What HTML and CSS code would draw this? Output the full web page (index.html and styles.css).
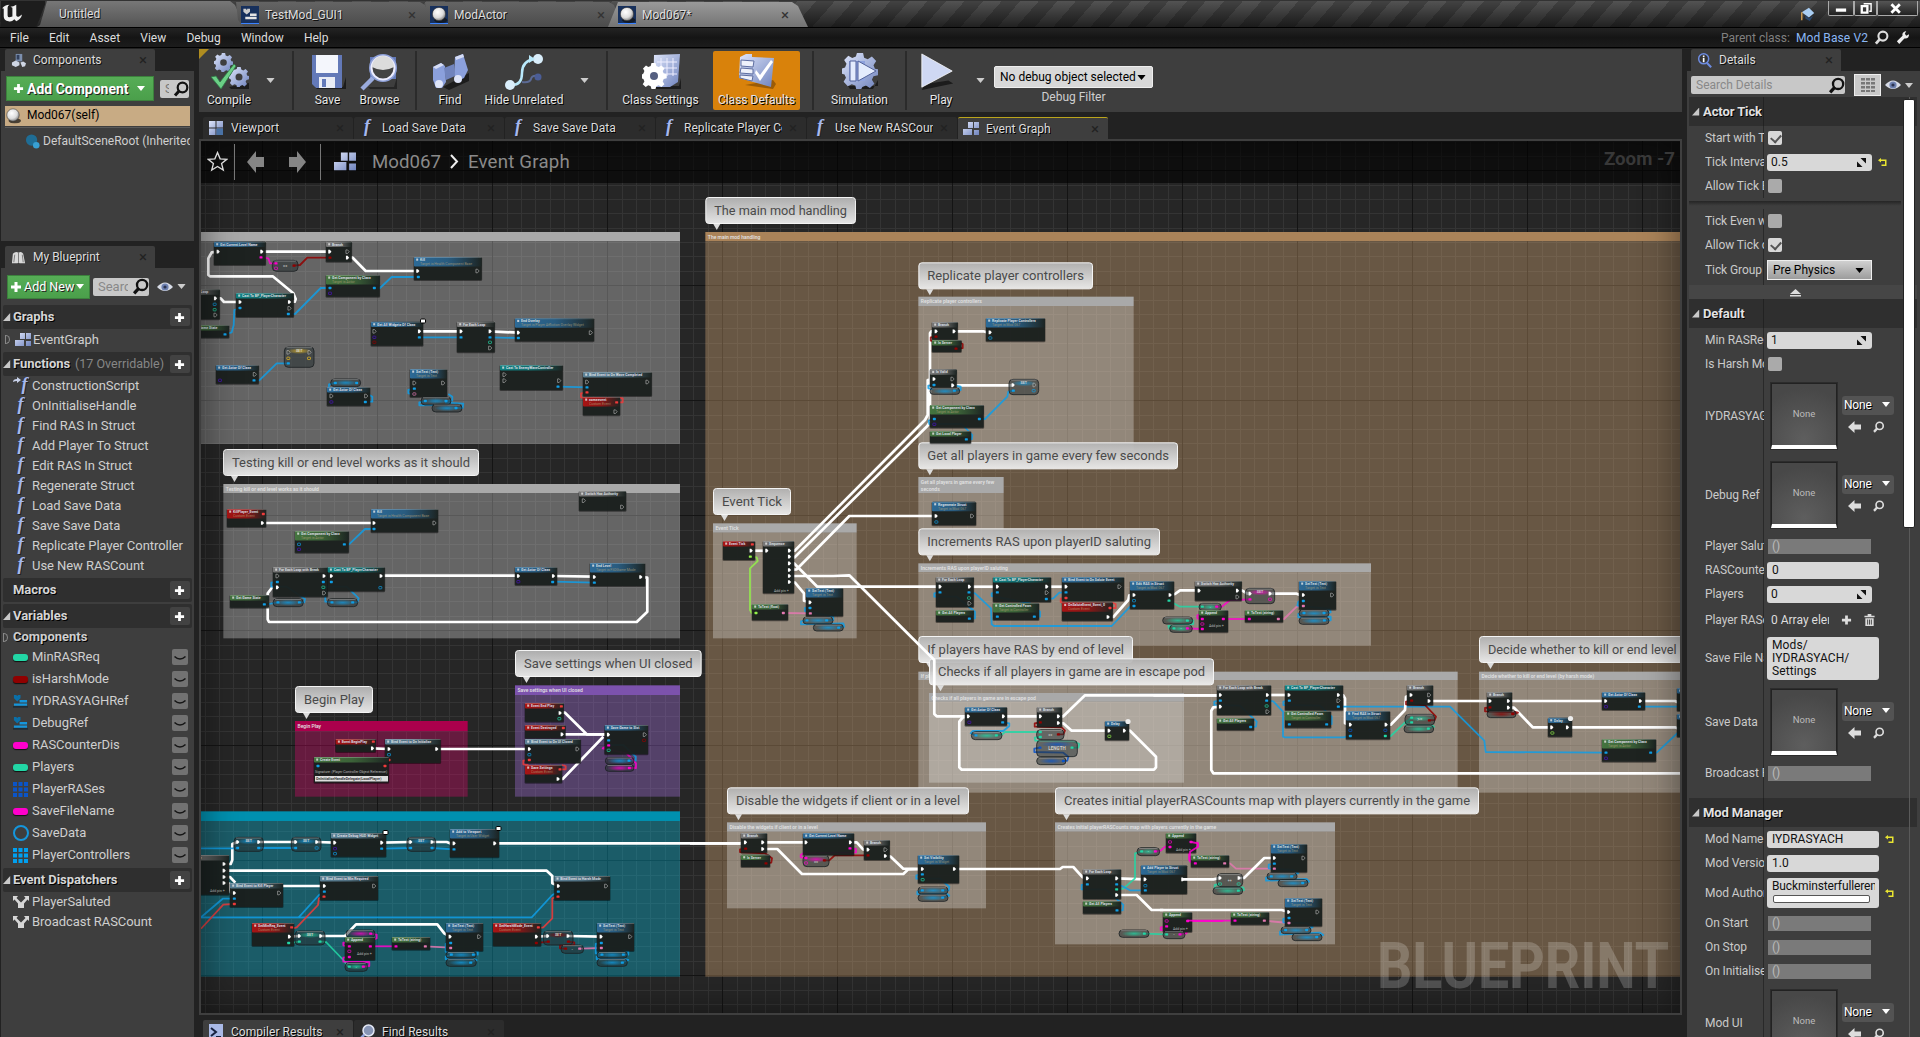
FILE: index.html
```html
<!DOCTYPE html>
<html lang="en">
<head>
<meta charset="utf-8">
<title>Mod067 - Blueprint Editor</title>
<link rel="stylesheet" href="styles.css">
</head>
<body>
<svg class="defs" width="0" height="0">
  <defs>
    <linearGradient id="steel" x1="0" y1="0" x2="1" y2="1"><stop offset="0" stop-color="#dfe6fb"/><stop offset="1" stop-color="#6f83bd"/></linearGradient>
    <radialGradient id="ball" cx=".4" cy=".35" r=".7"><stop offset="0" stop-color="#fff"/><stop offset=".6" stop-color="#ddd"/><stop offset="1" stop-color="#777"/></radialGradient>
    <symbol id="i-actor" viewBox="0 0 18 18"><ellipse cx="11" cy="15" rx="7" ry="3" fill="#111" opacity=".7"/><circle cx="9" cy="8.5" r="7" fill="url(#ball)" stroke="#333" stroke-width=".6"/></symbol>
    <symbol id="i-widget" viewBox="0 0 18 18"><path d="M2 3h3v1h1V3h3v3L5.5 9 2 6z" fill="#ccc"/><path d="M9 8h7v2.5H9zM4 11.5h12V14H4z" fill="#e4e4e4"/></symbol>
    <symbol id="i-varwidget" viewBox="0 0 16 16"><path d="M1 1h2.500l1 1 1-1H8v3.500L4.500 8 1 4.500z" fill="#0a6fa8"/><path d="M7 6.500h8V9H7zM1 10h14v2.500H1z" fill="#1596dc"/><path d="M0 13h16v1.500H0z" fill="#1a2a36"/></symbol>
    <symbol id="i-grid" viewBox="0 0 16 16"><path d="M5 1h5v6H5zM11 1h5v6h-5zM0 8h9v6H0zM11 9h5v5h-5z" fill="url(#steel)"/></symbol>
    <symbol id="i-viewport" viewBox="0 0 16 16"><path d="M1 1h6.500v6.500H1zM8.500 1H15v6.500H8.500zM1 8.500h6.500V15H1zM8.500 8.500H15V15H8.500z" fill="url(#steel)"/><path d="M8.500 8.500H15V15H8.500z" fill="#4a72a5"/></symbol>
    <symbol id="i-mag" viewBox="0 0 16 16"><circle cx="9.500" cy="6.500" r="4.800" fill="none" stroke="currentColor" stroke-width="2.200"/><path d="M6.500 9.500 2 14.500" stroke="currentColor" stroke-width="3"/></symbol>
    <symbol id="i-plus" viewBox="0 0 12 12"><path d="M4.500 1h3v3.500H11v3H7.500V11h-3V7.500H1v-3h3.500z" fill="currentColor"/></symbol>
    <symbol id="i-down" viewBox="0 0 10 6"><path d="M0 0h10L5 6z" fill="currentColor"/></symbol>
    <symbol id="i-eye" viewBox="0 0 18 12"><path d="M1 6Q9-3 17 6 9 14 1 6z" fill="#d7dbe6"/><circle cx="9" cy="6" r="3.600" fill="#6d80b0"/><circle cx="9" cy="6" r="1.600" fill="#2b3350"/></symbol>
    <symbol id="i-closed" viewBox="0 0 16 16"><rect width="16" height="16" rx="2" fill="#727272"/><path d="M2.500 7.500q5.500 5 11 0" fill="none" stroke="#161616" stroke-width="1.600"/></symbol>
    <symbol id="i-dispatch" viewBox="0 0 16 14"><path d="M0 1h5L3.500 3 8 7.500 12.500 3 11 1h5v5l-1.500-1.500L11 8.500V13H5V8.500L1.500 4.500 0 6z" fill="#d6d6d6"/><path d="M7 0h2v6H7z" fill="#3e3e3e"/></symbol>
    <symbol id="i-array" viewBox="0 0 15 15"><path d="M0 0h4v4H0zM5.500 0h4v4h-4zM11 0h4v4h-4zM0 5.500h4v4H0zM5.500 5.500h4v4h-4zM11 5.500h4v4h-4zM0 11h4v4H0zM5.500 11h4v4h-4zM11 11h4v4h-4z" fill="currentColor"/></symbol>
    <symbol id="i-spin" viewBox="0 0 9 9"><path d="M3.500 0H9v5.500zM0 3.500V9h5.500z" fill="#111"/></symbol>
    <symbol id="i-reset" viewBox="0 0 9 9"><path d="M3 0v1.500h5.500V8H3.500V6.500H7V3H3v1.500L0 2.250z" fill="#e9e531"/></symbol>
    <symbol id="i-left" viewBox="0 0 13 12"><path d="M6.500 0v3.500H13v5H6.500V12L0 6z" fill="currentColor"/></symbol>
    <symbol id="i-gear" viewBox="0 0 20 20"><path d="M8.300 0h3.400l.6 2.600 2 .9L16.600 2 19 4.500l-1.500 2.300.8 1.900L20 9v3.300l-2.500.6-.9 1.900 1.400 2.300-2.500 2.300-2.200-1.300-2 .8L10.700 20H7.900l-.5-1.900-2-.8-2.200 1.200L.9 16l1.300-2.200-.8-1.900L0 11.500V8.600L1.700 8l.8-2L1.200 3.900l2.300-2.400 2.200 1.300 2-.8zM10 6.500a3.500 3.500 0 1 0 0 7 3.500 3.500 0 0 0 0-7z" fill="url(#steel)" fill-rule="evenodd"/></symbol>
    <symbol id="t-compile" viewBox="0 0 40 38"><path d="M20 34l20-4v6H22z" fill="#1c1c1c"/><use href="#i-gear" x="5" y="0" width="19" height="19"/><use href="#i-gear" x="20" y="13" width="20" height="22"/><path d="M2 24l5-1 4 6L25 11l2 2-15 23z" fill="#6bcf86" stroke="#2d7a45" stroke-width=".8"/></symbol>
    <symbol id="t-save" viewBox="0 0 36 38"><path d="M5 34h28l3-10v12H7z" fill="#1c1c1c"/><path d="M2 2h30v33H6l-4-4z" fill="#6379b8"/><path d="M6 2h22v18H6z" fill="#f4f6fc"/><path d="M9 24h16v11H9z" fill="#e9ecf5"/><path d="M12 26h4v8h-4z" fill="#6379b8"/></symbol>
    <symbol id="t-browse" viewBox="0 0 40 38"><path d="M8 34h26l3-10v12H10z" fill="#1c1c1c" opacity=".7"/><path d="M10 4h26v22H10z" fill="#6379b8"/><circle cx="23" cy="15" r="14" fill="#8fa1d8"/><circle cx="23" cy="15" r="11.500" fill="#444" stroke="#eef" stroke-width="2"/><path d="M12 14a11 11 0 0 1 22 0q-11 6-22 0z" fill="#dcdcdc"/><path d="M13 25 2 36" stroke="#9aabdd" stroke-width="4.500"/></symbol>
    <symbol id="t-find" viewBox="0 0 38 38"><path d="M12 34 38 20v8L18 37z" fill="#1c1c1c"/><path d="M2 14l8-4 4 3 1 16-4 6H5L2 27z" fill="#8ba0dc"/><path d="M24 4l8-3 5 16-4 8-6 3-4-6z" fill="#8ba0dc"/><path d="M13 15l10-4 1 12-9 4z" fill="#7184bd"/><circle cx="8" cy="31" r="4" fill="#dfe5f8"/><circle cx="27" cy="26" r="4" fill="#dfe5f8"/><path d="M2 14l8-4 3 2-8 4zM24 4l8-3 1 3-8 3z" fill="#d5dcf5"/></symbol>
    <symbol id="t-hide" viewBox="0 0 40 38"><path d="M8 32q10 0 10-12T30 6" fill="none" stroke="#b9e9fb" stroke-width="2.500"/><path d="M18 29q8 1 9-3t7-3" fill="none" stroke="#5b6a94" stroke-width="2"/><circle cx="34" cy="6" r="5" fill="#d9eefb"/><circle cx="6" cy="32" r="5" fill="#d9eefb"/><circle cx="34" cy="24" r="3.500" fill="#4b5d96"/><path d="M25 2l6 4-6 4z" fill="#b9e9fb"/></symbol>
    <symbol id="t-settings" viewBox="0 0 40 38"><path d="M12 33h26l2-8v11H14z" fill="#1c1c1c"/><path d="M13 2l26-1-2 28-8 5H12z" fill="url(#steel)"/><path d="M20 5v18M26 5v18M32 5v18M16 9h20M16 15h20M16 21h20" stroke="#eef" fill="none"/><g transform="translate(1 10)"><path d="M9.500 0h4l.8 3 2.400 1L19.500 2.500l3 3L20.700 8l1 2.500 3 .8v4l-3 .7-1 2.500 1.700 2.700-3 2.800-2.700-1.700-2.400 1-.8 2.700h-4l-.8-2.700-2.400-1-2.600 1.700-3-2.800L2.400 18.500l-1-2.500-1.400-.5v-4l1.400-1 1-2.500L1 5.500l3-3L6.300 4l2.400-1z" fill="#fff"/><circle cx="12" cy="13" r="4" fill="#555f80"/></g></symbol>
    <symbol id="t-defaults" viewBox="0 0 40 38"><path d="M8 32l28-5 3 4-3 5z" fill="#9b5c07"/><path d="M3 4l6-3h6v3l22 1-3 29L2 25z" fill="url(#steel)"/><path d="M4 7l13 1-1 6L4 13zM4 15l12 1v5L3 20zM3 22l13 1-1 5-12-3z" fill="#eef1fb" stroke="#5d6da0"/><path d="M19 17l4 5L34 7l2 2-13 19-5-8z" fill="#fff"/></symbol>
    <symbol id="t-sim" viewBox="0 0 40 38"><path d="M8 33h30v-6l-5 9H10z" fill="#1c1c1c"/><use href="#i-gear" x="2" y="0" width="36" height="36"/><path d="M9 8h16v20H9z" fill="#8ea2dd"/><path d="M10 8h6v20h-6zM18 8l18 10-18 10z" fill="#e4ecfd" stroke="#53639a"/></symbol>
    <symbol id="t-play" viewBox="0 0 36 40"><path d="M2 39l33-7-5-3L5 33z" fill="#1c1c1c"/><path d="M2 1l32 18L2 36z" fill="#cfd8f3" stroke="#fff" stroke-width=".8"/></symbol>
  </defs>
</svg>

<header class="titlebar">
  <svg class="logo" viewBox="0 0 46 27"><path d="M0 0h46v3L38 24q-1 3-4 3H0z" fill="#1d1d1d"/><path d="M1 8q3-4 8-4-2 1-2 3v8q0 2 2 2l3-1V7l-2-1q3 0 6-2v11q1 2 3 1l3-2q-1 5-6 7l-2-2q-3 3-6 2-5-1-5-5V8q-1-1-2 0z" fill="#f2f2f2"/></svg>
  <div class="wtab wtab-first"><span>Untitled</span></div>
  <div class="wtab"><i class="wicon"><svg viewBox="0 0 18 18"><use href="#i-widget"/></svg></i><span>TestMod_GUI1</span><b class="x">×</b></div>
  <div class="wtab"><i class="wicon"><svg viewBox="0 0 18 18"><use href="#i-actor"/></svg></i><span>ModActor</span><b class="x">×</b></div>
  <div class="wtab wtab-on"><i class="wicon"><svg viewBox="0 0 18 18"><use href="#i-actor"/></svg></i><span>Mod067*</span><b class="x">×</b></div>
  <svg class="cap" viewBox="0 0 18 18"><path d="M2 7l8-5 6 6-6 5z" fill="#a9cdf2"/><path d="M6 10v4l5 3 4-6-5 3z" fill="#27466e"/><path d="M2 7v9" stroke="#d9a556" stroke-width="1.500"/></svg>
  <div class="winbtns"><i><svg viewBox="0 0 25 15"><path d="M7 8h11v3.500H7z" fill="#fff"/></svg></i><i><svg viewBox="0 0 22 15"><path d="M9 3h8v8h-2" fill="none" stroke="#fff" stroke-width="1.500"/><path d="M7 5.500h6v7H7z" fill="none" stroke="#fff" stroke-width="2.500"/></svg></i><i><svg viewBox="0 0 41 15"><path d="M14 3.500l9 9m0-9-9 9" stroke="#fff" stroke-width="3"/></svg></i></div>
</header>
<nav class="menubar">
  <span>File</span><span>Edit</span><span>Asset</span><span>View</span><span>Debug</span><span>Window</span><span>Help</span>
  <div class="parent"><em>Parent class:</em><a>Mod Base V2</a><svg viewBox="0 0 16 16"><use href="#i-mag"/></svg><svg viewBox="0 0 16 16"><path d="M2 12l6-6q-1-4 4-5l-1.500 3L12 6l3-1.500q0 5-5 4.500l-5.500 6z" fill="#eee"/></svg></div>
</nav>

<main class="work">
  <aside class="left">
    <section class="components">
      <div class="ptab"><svg viewBox="0 0 16 16"><path d="M5 1h7v8H5z" fill="#7c8fae"/><path d="M1 10l4-2 4 2v3l-4 2-4-2zM10 10l3-1 3 2-1 3-3 1z" fill="#cfd6e4"/><path d="M6 2h3v5H6z" fill="#32405c"/></svg><span>Components</span><b class="x">×</b></div>
      <div class="pbody">
        <div class="comp-tools"><div class="btn-green add-comp"><svg viewBox="0 0 12 12"><use href="#i-plus"/></svg><b>Add Component</b><svg class="dn" viewBox="0 0 10 6"><use href="#i-down"/></svg></div><div class="minisearch"><em>S</em><svg viewBox="0 0 16 16"><use href="#i-mag"/></svg></div></div>
        <div class="self"><svg viewBox="0 0 18 18"><use href="#i-actor"/></svg><span>Mod067(self)</span></div>
        <div class="scene"><svg viewBox="0 0 16 16"><circle cx="7" cy="6.500" r="6" fill="#1f6d95"/><circle cx="12" cy="12" r="3.500" fill="#38a0d4"/></svg><span>DefaultSceneRoot (Inherited)</span></div>
      </div>
    </section>
    <section class="myblueprint">
      <div class="ptab"><svg viewBox="0 0 16 16"><path d="M2 4q3-3 6-1 3-2 5 1l2 10H9l-1-1-1 1H1z" fill="#d9d9d9"/><path d="M8 3v10M4 5l-1 8M12 5l1 8" stroke="#777"/></svg><span>My Blueprint</span><b class="x">×</b></div>
      <div class="pbody">
        <div class="bp-tools"><div class="btn-green add-new"><svg viewBox="0 0 12 12"><use href="#i-plus"/></svg><span>Add New</span><svg class="dn" viewBox="0 0 10 6"><use href="#i-down"/></svg></div><div class="search"><em>Search</em><svg viewBox="0 0 16 16"><use href="#i-mag"/></svg></div><svg class="eye" viewBox="0 0 18 12"><use href="#i-eye"/></svg><svg class="dn" viewBox="0 0 10 6"><use href="#i-down"/></svg></div>
        <div class="cat"><i class="tri"></i><b>Graphs</b><u><svg viewBox="0 0 12 12"><use href="#i-plus"/></svg></u></div>
        <div class="item graph"><i class="tri-o"></i><svg viewBox="0 0 16 16"><use href="#i-grid"/></svg><span>EventGraph</span></div>
        <div class="cat"><i class="tri"></i><b>Functions</b><em>(17 Overridable)</em><u><svg viewBox="0 0 12 12"><use href="#i-plus"/></svg></u></div>
        <div class="item"><i class="fn"><svg class="cs" viewBox="0 0 8 8"><path d="M0 5q0-3 4-3V0l4 3-4 3V4Q2 4 0 5z" fill="#c9d2ea"/></svg>f</i><span>ConstructionScript</span></div>
        <div class="item"><i class="fn">f</i><span>OnInitialiseHandle</span></div>
        <div class="item"><i class="fn">f</i><span>Find RAS In Struct</span></div>
        <div class="item"><i class="fn">f</i><span>Add Player To Struct</span></div>
        <div class="item"><i class="fn">f</i><span>Edit RAS In Struct</span></div>
        <div class="item"><i class="fn">f</i><span>Regenerate Struct</span></div>
        <div class="item"><i class="fn">f</i><span>Load Save Data</span></div>
        <div class="item"><i class="fn">f</i><span>Save Save Data</span></div>
        <div class="item"><i class="fn">f</i><span>Replicate Player Controller</span></div>
        <div class="item"><i class="fn">f</i><span>Use New RASCount</span></div>
        <div class="cat"><i class="tri none"></i><b>Macros</b><u><svg viewBox="0 0 12 12"><use href="#i-plus"/></svg></u></div>
        <div class="cat"><i class="tri"></i><b>Variables</b><u><svg viewBox="0 0 12 12"><use href="#i-plus"/></svg></u></div>
        <div class="subcat"><i class="tri-o"></i><b>Components</b></div>
        <div class="var"><i class="pill int"></i><span>MinRASReq</span><svg viewBox="0 0 16 16"><use href="#i-closed"/></svg></div>
        <div class="var"><i class="pill bool"></i><span>isHarshMode</span><svg viewBox="0 0 16 16"><use href="#i-closed"/></svg></div>
        <div class="var"><i class="vi"><svg viewBox="0 0 16 16"><use href="#i-varwidget"/></svg></i><span>IYDRASYAGHRef</span><svg viewBox="0 0 16 16"><use href="#i-closed"/></svg></div>
        <div class="var"><i class="vi"><svg viewBox="0 0 16 16"><use href="#i-varwidget"/></svg></i><span>DebugRef</span><svg viewBox="0 0 16 16"><use href="#i-closed"/></svg></div>
        <div class="var"><i class="pill str"></i><span>RASCounterDis</span><svg viewBox="0 0 16 16"><use href="#i-closed"/></svg></div>
        <div class="var"><i class="pill int"></i><span>Players</span><svg viewBox="0 0 16 16"><use href="#i-closed"/></svg></div>
        <div class="var"><i class="vi arr-struct"><svg viewBox="0 0 15 15"><use href="#i-array"/></svg></i><span>PlayerRASes</span><svg viewBox="0 0 16 16"><use href="#i-closed"/></svg></div>
        <div class="var"><i class="pill str"></i><span>SaveFileName</span><svg viewBox="0 0 16 16"><use href="#i-closed"/></svg></div>
        <div class="var"><i class="ring"></i><span>SaveData</span><svg viewBox="0 0 16 16"><use href="#i-closed"/></svg></div>
        <div class="var"><i class="vi arr-obj"><svg viewBox="0 0 15 15"><use href="#i-array"/></svg></i><span>PlayerControllers</span><svg viewBox="0 0 16 16"><use href="#i-closed"/></svg></div>
        <div class="cat"><i class="tri"></i><b>Event Dispatchers</b><u><svg viewBox="0 0 12 12"><use href="#i-plus"/></svg></u></div>
        <div class="item"><svg class="disp" viewBox="0 0 16 14"><use href="#i-dispatch"/></svg><span>PlayerSaluted</span></div>
        <div class="item"><svg class="disp" viewBox="0 0 16 14"><use href="#i-dispatch"/></svg><span>Broadcast RASCount</span></div>
      </div>
    </section>
  </aside>

  <section class="center">
    <div class="toolbar">
      <i class="corner"></i>
      <div class="tool w-compile"><svg viewBox="0 0 40 38"><use href="#t-compile"/></svg><span>Compile</span></div><svg class="dn dn1" viewBox="0 0 10 6"><use href="#i-down"/></svg><i class="sep"></i>
      <div class="tool w-save"><svg viewBox="0 0 36 38"><use href="#t-save"/></svg><span>Save</span></div>
      <div class="tool w-browse"><svg viewBox="0 0 40 38"><use href="#t-browse"/></svg><span>Browse</span></div><i class="sep"></i>
      <div class="tool w-find"><svg viewBox="0 0 38 38"><use href="#t-find"/></svg><span>Find</span></div>
      <div class="tool w-hide"><svg viewBox="0 0 40 38"><use href="#t-hide"/></svg><span>Hide Unrelated</span></div><svg class="dn dn2" viewBox="0 0 10 6"><use href="#i-down"/></svg><i class="sep"></i>
      <div class="tool w-set"><svg viewBox="0 0 40 38"><use href="#t-settings"/></svg><span>Class Settings</span></div>
      <div class="tool w-def on"><svg viewBox="0 0 40 38"><use href="#t-defaults"/></svg><span>Class Defaults</span></div><i class="sep s2"></i>
      <div class="tool w-sim"><svg viewBox="0 0 40 38"><use href="#t-sim"/></svg><span>Simulation</span></div><i class="sep"></i>
      <div class="tool w-play"><svg viewBox="0 0 36 40"><use href="#t-play"/></svg><span>Play</span></div><svg class="dn dn3" viewBox="0 0 10 6"><use href="#i-down"/></svg>
      <div class="debug"><div class="dd"><span>No debug object selected</span><svg viewBox="0 0 10 6"><use href="#i-down"/></svg></div><span>Debug Filter</span></div>
    </div>
    <div class="tabs">
      <div class="tab"><svg viewBox="0 0 16 16"><use href="#i-viewport"/></svg><span>Viewport</span><b class="x">×</b></div>
      <div class="tab"><i class="fn">f</i><span>Load Save Data</span><b class="x">×</b></div>
      <div class="tab"><i class="fn">f</i><span>Save Save Data</span><b class="x">×</b></div>
      <div class="tab"><i class="fn">f</i><span>Replicate Player Controller</span><b class="x">×</b></div>
      <div class="tab"><i class="fn">f</i><span>Use New RASCount</span><b class="x">×</b></div>
      <div class="tab on"><svg viewBox="0 0 16 16"><use href="#i-grid"/></svg><span>Event Graph</span><b class="x">×</b></div>
    </div>
    <div class="graph-frame">
      <svg id="graph" viewBox="201 141 1479 872" width="1479" height="872"></svg>
      <div class="vignette"></div>
      <div class="crumbs">
        <svg class="star" viewBox="0 0 20 20"><path d="M10 1.500l2.500 6 6.300.4-4.900 4.100 1.600 6.200L10 14.800l-5.500 3.400 1.600-6.200L1.200 7.900l6.300-.4z" fill="none" stroke="#ddd" stroke-width="1.300"/></svg>
        <i class="bar"></i>
        <svg class="nav" viewBox="0 0 17 22"><path d="M9 0v6h8v10H9v6L0 11z" fill="#858585"/></svg>
        <svg class="nav n2" viewBox="0 0 17 22"><path d="M8 0v6H0v10h8v6l9-11z" fill="#858585"/></svg>
        <i class="bar b2"></i>
        <svg class="gi" viewBox="0 0 16 16"><use href="#i-grid"/></svg>
        <span>Mod067</span><svg class="chev" viewBox="0 0 9 15"><path d="M1 1l6 6.500L1 14" fill="none" stroke="#eee" stroke-width="2"/></svg><span>Event Graph</span>
        <strong>Zoom -7</strong>
      </div>
    </div>
    <div class="tabs bottom">
      <div class="tab on"><svg viewBox="0 0 16 16"><path d="M1 0h14v14l-2 2H1z" fill="#a9b9e6"/><path d="M3 4l5 4-5 4M8 13h5" fill="none" stroke="#16213f" stroke-width="2"/></svg><span>Compiler Results</span><b class="x">×</b></div>
      <div class="tab"><svg viewBox="0 0 16 16"><circle cx="9.500" cy="6.500" r="5.500" fill="#8795b5" stroke="#e3e8f5" stroke-width="1.500"/><path d="M5.500 10.500 1 15" stroke="#8fa1d8" stroke-width="2.500"/></svg><span>Find Results</span><b class="x">×</b></div>
    </div>
  </section>

  <aside class="right">
    <div class="ptab"><svg viewBox="0 0 18 18"><circle cx="8" cy="7" r="6" fill="#333" stroke="#6d8be0" stroke-width="1.800"/><path d="M12 12l5 5" stroke="#6d8be0" stroke-width="2.500"/><path d="M7 3h2v2H7zM7 6h2v5H7z" fill="#fff"/></svg><span>Details</span><b class="x">×</b></div>
    <div class="pbody">
      <div class="det-tools"><div class="search"><em>Search Details</em><svg viewBox="0 0 16 16"><use href="#i-mag"/></svg></div><i class="matrix"><svg viewBox="0 0 14 14"><path d="M0 0h4v2.500H0zM5 0h4v2.500H5zM10 0h4v2.500h-4zM0 4h4v2.500H0zM5 4h4v2.500H5zM10 4h4v2.500h-4zM0 8h4v2.500H0zM5 8h4v2.500H5zM10 8h4v2.500h-4zM0 12h4v2H0zM5 12h4v2H5zM10 12h4v2h-4z" fill="#777"/></svg></i><svg class="eye" viewBox="0 0 18 12"><use href="#i-eye"/></svg><svg class="dn" viewBox="0 0 10 6"><use href="#i-down"/></svg></div>
      <div class="props">
        <div class="scroll"><i></i></div>
        <div class="dhead"><i class="tri"></i><b>Actor Tick</b></div>
        <div class="row"><label>Start with Tick</label><i class="chk on"></i></div>
        <div class="row"><label>Tick Interval</label><div class="num">0.5<svg viewBox="0 0 9 9"><use href="#i-spin"/></svg></div><svg class="rst far" viewBox="0 0 9 9"><use href="#i-reset"/></svg></div>
        <div class="row"><label>Allow Tick Before</label><i class="chk"></i></div>
        <div class="advsep"></div>
        <div class="row"><label>Tick Even when</label><i class="chk"></i></div>
        <div class="row"><label>Allow Tick on</label><i class="chk on"></i></div>
        <div class="row h26"><label>Tick Group</label><div class="combo">Pre Physics<svg viewBox="0 0 10 6"><use href="#i-down"/></svg></div></div>
        <div class="strip"><svg viewBox="0 0 11 8"><path d="M5.500 0 11 5H0zM0 6h11v1.500H0z" fill="#ddd"/></svg></div>
        <div class="dhead"><i class="tri"></i><b>Default</b></div>
        <div class="row"><label>Min RASReq</label><div class="num">1<svg viewBox="0 0 9 9"><use href="#i-spin"/></svg></div></div>
        <div class="row"><label>Is Harsh Mode</label><i class="chk"></i></div>
        <div class="row h79"><label>IYDRASYAGHRef</label><div class="thumb">None</div><div class="asset"><div>None<svg viewBox="0 0 10 6"><use href="#i-down"/></svg></div><p><svg viewBox="0 0 13 12"><use href="#i-left"/></svg><svg viewBox="0 0 16 16"><use href="#i-mag"/></svg></p></div></div>
        <div class="row h79"><label>Debug Ref</label><div class="thumb">None</div><div class="asset"><div>None<svg viewBox="0 0 10 6"><use href="#i-down"/></svg></div><p><svg viewBox="0 0 13 12"><use href="#i-left"/></svg><svg viewBox="0 0 16 16"><use href="#i-mag"/></svg></p></div></div>
        <div class="row"><label>Player Saluted</label><div class="dim">()</div></div>
        <div class="row"><label>RASCounterDis</label><div class="txt">0</div></div>
        <div class="row"><label>Players</label><div class="num">0<svg viewBox="0 0 9 9"><use href="#i-spin"/></svg></div></div>
        <div class="row h28"><label>Player RASes</label><div class="arr"><span>0 Array elements</span><svg viewBox="0 0 12 12"><use href="#i-plus"/></svg><svg viewBox="0 0 11 13"><path d="M0 2h3.500V0h4v2H11v1.500H0zM1 4.500h9V13H1z" fill="#ddd"/><path d="M3.500 6v5.500M5.500 6v5.500M7.500 6v5.500" stroke="#3e3e3e"/></svg></div></div>
        <div class="row h48"><label>Save File Name</label><div class="txt multi">Mods/<br>IYDRASYACH/<br>Settings</div></div>
        <div class="row h79"><label>Save Data</label><div class="thumb">None</div><div class="asset"><div>None<svg viewBox="0 0 10 6"><use href="#i-down"/></svg></div><p><svg viewBox="0 0 13 12"><use href="#i-left"/></svg><svg viewBox="0 0 16 16"><use href="#i-mag"/></svg></p></div></div>
        <div class="row"><label>Broadcast RASCount</label><div class="dim">()</div></div>
        <div class="gap13"></div>
        <div class="dhead full"><i class="tri"></i><b>Mod Manager</b></div>
        <div class="row"><label>Mod Name</label><div class="txt">IYDRASYACH</div><svg class="rst" viewBox="0 0 9 9"><use href="#i-reset"/></svg></div>
        <div class="row"><label>Mod Version</label><div class="txt">1.0</div></div>
        <div class="row h36"><label>Mod Author</label><div class="txt author"><span>Buckminsterfullerene</span><i></i></div><svg class="rst" viewBox="0 0 9 9"><use href="#i-reset"/></svg></div>
        <div class="row"><label>On Start</label><div class="dim">()</div></div>
        <div class="row"><label>On Stop</label><div class="dim">()</div></div>
        <div class="row"><label>On Initialised</label><div class="dim">()</div></div>
        <div class="row h79"><label>Mod UI</label><div class="thumb">None</div><div class="asset"><div>None<svg viewBox="0 0 10 6"><use href="#i-down"/></svg></div><p><svg viewBox="0 0 13 12"><use href="#i-left"/></svg><svg viewBox="0 0 16 16"><use href="#i-mag"/></svg></p></div></div>
      </div>
    </div>
  </aside>
</main>
<script src="graph.js"></script>
</body>
</html>
```
FILE: styles.css
```css
* { box-sizing: border-box; }
body { margin: 0; width: 1920px; height: 1037px; overflow: hidden; background: #222; color: #cfcfcf; font: 12px/16px Roboto, "Liberation Sans", sans-serif; display: flex; flex-direction: column; }
svg { display: block; flex: none; }
i, em, u { font-style: normal; text-decoration: none; flex: none; }
.defs { position: absolute; }
.x { font-weight: 400; font-size: 15px; color: #222; margin-left: auto; text-shadow: none; }
.dn { width: 9px; height: 5px; color: #ccc; }

.titlebar { height: 27px; display: flex; flex: none; background: linear-gradient(rgba(0,0,0,0), rgba(0,0,0,.6)), repeating-linear-gradient(131deg, #424242 0 14px, #535353 14px 28px); border-top: 1px solid #333; overflow: hidden; }
.logo { width: 46px; height: 26px; z-index: 1; }
.wtab { position: relative; display: flex; align-items: center; width: 200px; margin-right: -11px; padding: 0 20px 0 5px; height: 25px; margin-top: 1px; background: linear-gradient(#646464, #4b4b4b); clip-path: polygon(0 0, 184px 0, 189px 3px, 198px 100%, 8px 100%, 2px 18px); color: #ddd; text-shadow: 1px 1px 0 #111; }
.wtab-first { margin-left: -9px; width: 210px; height: 26px; margin-top: 0; background: linear-gradient(#777, #545454); clip-path: polygon(10px 0, 193px 0, 198px 4px, 208px 100%, 0 100%, 3px 24px); padding-left: 22px; }
.wtab-on { background: linear-gradient(#999, #747474); margin-left: -6px; width: 201px; clip-path: polygon(10px 0, 184px 0, 190px 4px, 200px 100%, 0 100%); }
.wtab-on .wicon { margin-left: 5px; }
.wicon { width: 18px; height: 18px; background: #17305c; border-bottom: 1px solid #3a82ff; margin-right: 6px; }
.wicon svg { width: 18px; height: 17px; }
.wtab .x { color: #333; }
.cap { width: 16px; height: 18px; margin: 4px 12px 0 auto; }
.winbtns { display: flex; height: 15px; margin-right: 2px; }
.winbtns i { border: 1px solid #aaa; border-top: 0; background: linear-gradient(#555, #222); border-radius: 0 0 2px 2px; }
.winbtns svg { height: 14px; width: 24px; }
.winbtns i:nth-child(2) svg { width: 21px; }
.winbtns i:nth-child(3) svg { width: 39px; }

.menubar { height: 21px; flex: none; display: flex; align-items: center; gap: 20.2px; padding-left: 10px; border-top: 1px solid #000; border-bottom: 1px solid #000; background: linear-gradient(#232323, #151515 50%, #1c1c1c); color: #ddd; }
.parent { margin-left: auto; display: flex; align-items: center; gap: 5px; padding-right: 10px; }
.parent em { color: #808080; margin-right: 1px; }
.parent a { color: #8cb8f5; letter-spacing: .1px; }
.parent svg { width: 15px; height: 15px; margin-left: 1px; color: #ddd; }

.work { flex: 1; min-height: 0; display: flex; padding-top: 1px; }
.left { width: 194px; flex: none; display: flex; flex-direction: column; gap: 5px; }
.ptab { width: 150px; height: 22px; margin-left: 5px; background: #3e3e3e; border-radius: 2px 2px 0 0; display: flex; align-items: center; padding: 0 8px 0 6px; gap: 7px; color: #ddd; text-shadow: 1px 1px 0 #111; }
.ptab svg { width: 15px; height: 15px; }
.pbody { flex: 1; min-height: 0; background: #3e3e3e; margin-left: 1px; }
.components { height: 192px; display: flex; flex-direction: column; }
.myblueprint { flex: 1; display: flex; flex-direction: column; min-height: 0; }
.btn-green { background: linear-gradient(#56ad56, #4b9f4b); border: 1px solid #3c813d; display: flex; align-items: center; color: #fff; text-shadow: 1px 1px 0 #222; white-space: nowrap; }
.btn-green .dn { color: #fff; margin-left: auto; width: 8px; }
.comp-tools { display: flex; align-items: center; padding: 5px 0 0 5px; gap: 6px; }
.add-comp { width: 148px; height: 25px; padding: 0 8px 0 6px; font-size: 14px; gap: 3px; }
.add-comp svg:first-child { width: 11px; height: 11px; }
.minisearch { width: 29px; height: 18px; background: #c8c8c8; border-radius: 2px; display: flex; align-items: center; justify-content: space-between; padding: 0 0 0 5px; color: #111; }
.minisearch em { width: 4px; overflow: hidden; color: #777; }
.minisearch svg { width: 16px; height: 16px; }
.self { margin: 5px 4px 0 4px; height: 20px; background: #c8ab84; color: #000; display: flex; align-items: center; gap: 6px; }
.self span { padding-bottom: 3px; }
.self svg { width: 16px; height: 17px; margin-bottom: 2px; }
.scene { border-top: 1px solid #5a5a5a; margin: 1px 4px 0; height: 27px; display: flex; align-items: center; gap: 3px; padding-left: 20px; overflow: hidden; white-space: nowrap; }
.scene span { overflow: hidden; }
.scene svg { width: 15px; height: 15px; }

.bp-tools { display: flex; align-items: center; height: 37px; padding-left: 6px; gap: 3px; }
.add-new { width: 83px; height: 24px; padding: 0 5px 0 2px; font-size: 12.500px; gap: 2px; }
.add-new svg:first-child { width: 12px; height: 12px; }
.search { width: 56px; height: 18px; background: #c8c8c8; border-radius: 2px; display: flex; align-items: center; color: #111; padding-left: 5px; }
.search em { color: #888; width: 30px; overflow: hidden; flex: none; font-size: 13px; }
.search svg { width: 17px; height: 17px; margin-left: auto; }
.eye { width: 18px; height: 12px; margin-left: 4px; }
.cat { height: 24px; margin: 0 2px; background: #2f2f2f; border-radius: 2px; display: flex; align-items: center; font-size: 13px; color: #d6d6d6; text-shadow: 1px 1px 0 #000; }
.item + .cat, .cat + .cat, .var + .cat { margin-top: 2px; }
.cat u { width: 20px; height: 18px; border-radius: 2px; background: #424242; margin-left: auto; margin-right: 2px; padding: 4px 4px; color: #fff; }
.cat u svg { width: 11px; height: 11px; }
.cat b { letter-spacing: -.05px; }
.cat em { color: #868686; margin-left: 5px; text-shadow: none; font-size: 12.500px; }
.tri { width: 9px; height: 8px; background: #c9c9c9; clip-path: polygon(80% 0, 80% 100%, 0 100%); flex: none; margin-right: 1px; }
.tri.none { visibility: hidden; }
.tri-o { width: 5px; height: 9px; border: 1px solid #888; border-radius: 0 5px 5px 0; margin: 0 5px 0 2px; }
.item { height: 20px; display: flex; align-items: center; padding-left: 12px; font-size: 13px; }
.item span, .var span { letter-spacing: -.05px; }
.item.graph { height: 21px; padding-left: 2px; }
.item.graph svg { width: 16px; height: 16px; margin-right: 2px; }
.item .fn { width: 19px; }
.fn { font: italic bold 18px/15px "Liberation Serif", serif; color: #a5b8ee; text-align: center; text-shadow: 1px 1px 0 #222; height: 18px; display: block; position: relative; padding-right: 4px; }
.item:has(.cs) .fn { padding: 0 0 0 4px; }
.cs { position: absolute; left: 0; top: 0; width: 8px; height: 8px; }
.disp { width: 16px; height: 14px; margin-right: 3px; }
.subcat { height: 18px; display: flex; align-items: center; font-size: 13px; text-shadow: 1px 1px 0 #000; }
.var { height: 22px; display: flex; align-items: center; padding: 0 6px 0 12px; font-size: 13px; }
.var > svg { width: 16px; height: 16px; margin-left: auto; }
.pill { width: 15px; height: 7px; border-radius: 3px; margin-right: 4px; box-shadow: 0 1px 1px #111; }
.int { background: #22d6a5; } .bool { background: #900000; } .str { background: #f0c; }
.vi { width: 16px; margin-right: 3px; } .vi svg { width: 15px; height: 15px; }
.arr-struct { color: #0a54c8; } .arr-obj { color: #00a0f0; }
.ring { width: 16px; height: 16px; border: 2px solid #1596dc; border-radius: 50%; margin-right: 3px; }

.center { width: 1483px; margin-left: 5px; flex: none; display: flex; flex-direction: column; }
.toolbar { height: 63px; background: #3e3e3e; display: flex; flex: none; padding-top: 2px; position: relative; }
.corner { position: absolute; left: 0; top: 0; width: 10px; height: 10px; background: #b08d20; clip-path: polygon(0 0, 100% 0, 0 100%); }
.tool { height: 59px; display: flex; flex-direction: column; align-items: center; color: #e6e6e6; text-shadow: 1px 1px 0 #000; border-radius: 2px; padding-top: 2px; white-space: nowrap; flex: none; }
.tool svg { width: 40px; height: 38px; }
.tool span { margin-top: 1px; }
.tool.on { background: #d9820b; }
.sep { width: 2px; height: 59px; background: #2b2b2b; }
.toolbar > .dn { margin-top: 27px; }
.w-compile { width: 60px; } .dn1 { margin: 0 17px 0 7px; } .w-save { width: 66px; padding-left: 1px; } .w-browse { width: 39px; margin-right: 16px; } .w-find { width: 66px; } .w-hide { width: 82px; }
.dn2 { margin: 0 17px 0 15px; } .w-set { width: 104px; padding-left: 1px; } .w-def { width: 87px; margin-left: 1px; margin-right: 12px; } .w-sim { width: 91px; } .w-play { width: 68px; } .w-play svg { margin-left: -8px; } .dn3 { margin: 0 9px 0 1px; }
.debug { display: flex; flex-direction: column; align-items: center; padding-top: 15px; }
.debug > span { margin-top: 1px; }
.dd { width: 159px; height: 22px; background: #d8d8d8; border: 1px solid #eee; border-radius: 2px; color: #000; display: flex; align-items: center; justify-content: space-between; padding: 0 6px 0 5px; }
.dd svg { width: 9px; height: 5px; }
.tabs { display: flex; gap: 1px; padding: 5px 0 0 4px; flex: none; height: 27px; }
.tab { width: 150px; height: 22px; background: #2c2c2c; display: flex; align-items: center; padding: 0 9px 0 5px; gap: 7px; color: #ddd; text-shadow: 1px 1px 0 #000; border-radius: 2px 2px 0 0; white-space: nowrap; }
.tab.on { background: #3e3e3e; }
.tabs:not(.bottom) .tab.on { border-top: 1px solid #bba51c; }
.tab svg { width: 16px; height: 16px; }
.tab .fn { width: 16px; padding: 0; }
.tab span { overflow: hidden; max-width: 101px; letter-spacing: .05px; }
.graph-frame { height: 876px; border: 2px solid #3f3f3f; position: relative; overflow: hidden; flex: none; background: #262626; }
.vignette { position: absolute; inset: 0; box-shadow: inset 0 0 36px rgba(0,0,0,.5); }
.crumbs { position: absolute; left: 0; right: 0; top: 0; height: 42px; background: rgba(0,0,0,.6); display: flex; align-items: center; font-size: 18.67px; color: #8a8a8a; padding: 0 5px 1px 6px; }
.star { width: 21px; height: 21px; }
.bar { width: 1px; height: 36px; background: #777; margin: 0 12px 0 6px; }
.nav { width: 17px; height: 22px; } .n2 { margin-left: 25px; }
.b2 { margin: 0 11px 0 14px; }
.gi { width: 26px; height: 22px; margin-right: 14px; }
.chev { width: 9px; height: 15px; margin: 0 9px; }
.crumbs span + svg + span { letter-spacing: .2px; }
.crumbs strong { margin-left: auto; color: #383838; font-size: 18.67px; align-self: flex-start; margin-top: 10px; }
.bottom { flex: 1; padding-top: 5px; overflow: hidden; }
.bottom .tab { height: 24px; font-size: 12px; letter-spacing: .05px; }

.right { width: 233px; margin-left: 5px; display: flex; flex-direction: column; }
.right .ptab { margin-left: 4px; }
.right .pbody { margin-left: 0; overflow: hidden; }
.det-tools { display: flex; height: 26px; align-items: center; padding: 2px 5px 0 4px; }
.det-tools .search { width: 154px; }
.det-tools .search em { width: auto; font-size: 12px; }
.matrix { width: 27px; height: 22px; background: #c9c9c9; border: 1px solid #eee; margin-left: 9px; padding: 3px 6px; }
.matrix svg { width: 14px; height: 14px; }
.det-tools .eye { margin-left: 3px; }
.det-tools .dn { margin-left: 3px; width: 8px; }
.props { position: relative; height: 965px; padding-left: 2px; background: linear-gradient(#292929, #292929) 76px 0/1px 100% no-repeat; }
.dhead { height: 29px; background: #2f2f2f linear-gradient(#222, #222) 74px 0/1px 100% no-repeat; display: flex; align-items: center; padding-left: 3px; font-size: 13px; color: #e2e2e2; text-shadow: 1px 1px 0 #000; margin-right: 3px; }
.dhead b { max-width: 60px; overflow: hidden; white-space: nowrap; letter-spacing: -.1px; }
.dhead .tri { margin-right: 2px; }
.dhead.full b { max-width: none; }
.row { height: 24px; display: flex; align-items: center; padding-left: 16px; color: #cacaca; }
.row label { width: 59px; overflow: hidden; white-space: nowrap; flex: none; margin-right: 3px; letter-spacing: -.08px; }
.h26 { height: 26px; } .h28 { height: 28px; } .h36 { height: 36px; } .h48 { height: 48px; } .h79 { height: 79px; }
.gap13 { height: 13px; }
.chk { width: 14px; height: 14px; border-radius: 2px; background: #aaa; margin-left: 1px; }
.chk.on { background: #d8d8d8; position: relative; }
.chk.on::after { content: ""; position: absolute; left: 3px; top: 3px; width: 8px; height: 5px; border-left: 2.500px solid #555; border-bottom: 2.500px solid #555; transform: rotate(-48deg); }
.num, .txt { height: 17px; background: #d8d8d8; border-radius: 3px; color: #111; display: flex; align-items: center; }
.num { width: 105px; padding: 0 6px 0 4px; justify-content: space-between; }
.num svg { width: 9px; height: 9px; }
.txt { width: 112px; padding: 0 5px; }
.multi { height: 43px; line-height: 13px; letter-spacing: .1px; }
.author { height: 30px; flex-direction: column; align-items: flex-start; overflow: hidden; }
.author span { width: 103px; overflow: hidden; letter-spacing: -.12px; }
.author i { width: 97px; height: 8px; border: 1px solid #555; border-radius: 2px; background: #fff; margin: 1px 0 0 1px; }
.rst { width: 9px; height: 9px; margin-left: 6px; }
.advsep { height: 11px; background: linear-gradient(#252525, #3e3e3e 80%) 0 3px/212px 6px no-repeat, #3e3e3e; margin-right: 16px; }
.combo { width: 105px; height: 20px; background: linear-gradient(#d0d0d0, #9c9c9c); border: 1px solid #eee; color: #000; display: flex; align-items: center; justify-content: space-between; padding: 0 7px 0 5px; letter-spacing: 0; }
.combo svg { width: 9px; height: 5px; }
.strip { margin: 2px 3px 0 0; height: 14px; background: #464646; padding: 4px 0 0 101px; }
.strip svg { width: 11px; height: 8px; }
.thumb { width: 66px; height: 66px; margin-left: 4px; background: radial-gradient(circle at 50% 90%, #5e5e5e, #484848 80%); border: 1px solid #222; border-bottom: 4px solid #fff; outline: 1px solid #2c2c2c; display: flex; align-items: center; justify-content: center; color: #bbb; font-size: 9.500px; flex: none; }
.asset { margin-left: 5px; width: 52px; padding-bottom: 2px; }
.asset div { height: 19px; background: #535353; border-radius: 3px; display: flex; align-items: center; justify-content: space-between; padding: 0 4px 2px 2px; color: #fff; text-shadow: 1px 1px 0 #000; letter-spacing: -.2px; }
.asset div svg { width: 8px; height: 5px; }
.asset p { display: flex; margin: 6px 0 0 6px; gap: 11px; color: #ddd; }
.asset p svg { width: 13px; height: 12px; }
.dim { width: 103px; height: 15px; background: #7a7a7a; margin-left: 1px; padding-left: 4px; line-height: 15px; color: #bbb; }
.arr { display: flex; align-items: center; gap: 12px; padding-left: 4px; color: #ddd; }
.arr span { width: 58px; overflow: hidden; white-space: nowrap; }
.arr svg { width: 11px; height: 12px; }
.scroll { position: absolute; right: 0; top: 0; width: 18px; height: 100%; z-index: 1; }
.scroll::before { content: ""; position: absolute; left: 7px; top: 0; width: 1px; height: 100%; background: #5a5a5a; }
.scroll i { position: absolute; left: 1px; top: 2px; width: 12px; height: 429px; background: #fff; border: 1px solid #222; border-radius: 2px; }

#graph text { font-family: Roboto, "Liberation Sans", sans-serif; }
```
FILE: graph.js
```js
// Node graph renderer. Each region has an origin in canvas pixels and lists
// its content in graph units, three units to a pixel at this zoom level.
const U = 3;
const svg = document.getElementById('graph');
const PIN = { w:'#fff', e:'#fff', b:'#0f9ee6', m:'#f0c', r:'#920000', d:'#f03a3a', n:'#22d6a5', p:'#4a12c0', l:'#93f04a', k:'#e378b0', y:'#f0c020', u:'#0a54c8' };
const HEAD = { b:'#2c6a97', g:'#44743f', t:'#0f7f80', r:'#a81414', k:'#777', c:'#5b8196' };
let out = '';
const add = s => { out += s; };

add('<defs>');
for (const k in HEAD) add(`<linearGradient id="h-${k}"><stop offset="0" stop-color="${HEAD[k]}"/><stop offset=".5" stop-color="${HEAD[k]}" stop-opacity=".8"/><stop offset="1" stop-color="#1c2422" stop-opacity=".9"/></linearGradient>`);
for (const k in PIN) add(`<radialGradient id="g-${k}"><stop offset="0" stop-color="${PIN[k]}" stop-opacity=".75"/><stop offset="1" stop-color="${PIN[k]}" stop-opacity="0"/></radialGradient>`);
add('<linearGradient id="bub" x2="0" y2="1"><stop offset="0" stop-color="#b4b4b4" stop-opacity=".95"/><stop offset="1" stop-color="#eee" stop-opacity=".95"/></linearGradient></defs>');

// background grid: eight minor cells to a major one
for (let pass = 0; pass < 2; pass++) {
  for (let i = -16; i < 110; i++) {
    const major = i % 8 === 0;
    if (major !== (pass === 1)) continue;
    const c = major ? '#141414' : '#343434';
    const x = Math.round(377.2 + i * 14.375), y = Math.round(285.2 + i * 14.375);
    add(`<rect x="${x}" y="141" width="1" height="872" fill="${c}"/>`);
    if (y < 1013) add(`<rect x="201" y="${y}" width="1479" height="1" fill="${c}"/>`);
  }
}

const TINT = { gray:['242,242,242','#a9a9a9'], brown:['251,196,135','#aa8359'], teal:['3,212,251','#0090af'], rose:['244,2,119','#ab004c'], violet:['186,125,255','#7c52ad'] };
function comment(ox, oy, tint, x1, y1, x2, y2, hh, text) {
  const [f, h] = TINT[tint], x = ox + x1 / U, y = oy + y1 / U, w = (x2 - x1) / U;
  add(`<rect x="${x}" y="${y + hh / U}" width="${w}" height="${(y2 - y1 - hh) / U}" fill="rgba(${f},.31)"/><rect x="${x}" y="${y}" width="${w}" height="${hh / U}" fill="${h}"/>`);
  (text || '').split('/').forEach((t, i) => add(`<text x="${x + 2.5}" y="${y + 6.6 + i * 7}" font-size="5" font-weight="500" fill="#e4e4e4">${t}</text>`));
}
function bubble(ox, oy, x1, y1, x2, text) {
  const x = ox + x1 / U, y = oy + y1 / U, w = (x2 - x1) / U;
  add(`<path d="M${x + 8} ${y + 27}h7l-3.5 6z" fill="#ddd"/><rect x="${x + .5}" y="${y + .5}" width="${w - 1}" height="26" rx="3" fill="url(#bub)" stroke="#f4f4f4"/><text x="${x + 9}" y="${y + 18}" font-size="13.33" fill="#4a4a4a" textLength="${w - 18}" lengthAdjust="spacingAndGlyphs">${text}</text>`);
}
function wire(ox, oy, s) {
  const [c, ...p] = s.split(' ');
  const pts = p.map(q => { const [a, b] = q.split(','); return `${(ox + a / U).toFixed(1)},${(oy + b / U).toFixed(1)}`; }).join(' ');
  add(`<polyline points="${pts}" fill="none" stroke="${PIN[c]}" stroke-width="${c === 'w' ? 2.7 : 1.8}" stroke-linejoin="round" opacity="${c === 'w' ? 1 : .85}"/>`);
}
function pin(ox, oy, s) {
  const k = s[0], [a, b] = s.slice(1).split(','), x = ox + a / U, y = oy + b / U, low = k.toLowerCase(), c = PIN[low];
  if (low === 'e') add(`<path d="M${x - 1.4} ${y - 1.8}h1.6l1.6 1.8-1.600 1.8h-1.600z" ${k === 'e' ? 'fill="#fff"' : 'fill="none" stroke="#bbb" stroke-width=".6"'}/>`);
  else add(`<rect x="${x - 1.5}" y="${y - 1.2}" width="3" height="2.400" rx=".6" ${k === low ? `fill="${c}"` : `fill="none" stroke="${c}" stroke-width=".7"`}/>`);
}
function node(ox, oy, s) {
  const [geo, title = '', sub = '', pins = ''] = s.split('|');
  const [k, x1, y1, w1, h1] = geo.split(' ');
  const x = ox + x1 / U, y = oy + y1 / U, w = w1 / U, h = h1 / U;
  if (k[0] === 'v') {
    const r = Math.min(h / 2, 4);
    add(`<rect x="${x}" y="${y}" width="${w}" height="${h}" rx="${r}" fill="rgba(38,48,50,.55)" stroke="#1a2022" stroke-width=".8"/><rect x="${x + 2}" y="${y + .3}" width="${w - 4}" height=".8" fill="#ccc" opacity=".5"/>`);
    if (k[1]) add(`<ellipse cx="${x + w / 2}" cy="${y + Math.min(h / 2, 4)}" rx="${w * .42}" ry="3" fill="url(#g-${k[1]})"/>`);
    if (title) add(`<text x="${x + w / 2}" y="${y + Math.min(h / 2 + 1.5, title === 'SET' ? 4.600 : 99)}" font-size="${title.length < 4 ? 3.6 : 4.6}" font-weight="700" fill="#ccc" text-anchor="middle">${title}</text>`);
  } else {
    const hh = sub ? 9.5 : 5.4;
    add(`<rect x="${x - .5}" y="${y}" width="${w + 1}" height="${h + 1}" rx="1.500" fill="#000" opacity=".45"/><rect x="${x}" y="${y}" width="${w}" height="${h}" rx="1" fill="#1b201e" opacity=".93"/><rect x="${x}" y="${y}" width="${w}" height="${hh}" rx="1" fill="url(#h-${k})"/><rect x="${x}" y="${y}" width="${w}" height=".8" fill="#fff" opacity=".3"/><rect x="${x + 2.2}" y="${y + 1.500}" width="2" height="2.200" fill="#e6e6e6" opacity=".8"/><text x="${x + 6}" y="${y + 4}" font-size="3.500" font-weight="700" fill="#d8dde0">${title}</text>`);
    if (sub) add(`<text x="${x + 6}" y="${y + 8}" font-size="3.500" fill="#b9a67c" opacity=".7">${sub}</text>`);
  }
  pins.split(' ').filter(Boolean).forEach(p => pin(ox, oy, p));
}
function region(ox, oy, wires, nodes) {
  wires.trim().split('\n').forEach(s => wire(ox, oy, s.trim()));
  nodes.trim().split('\n').forEach(s => node(ox, oy, s.trim()));
}

comment(200, 225, 'gray', 3, 21, 1440, 657, 27);
comment(200, 225, 'gray', 70, 777, 1440, 1240, 27, 'Testing kill or end level works as it should');
comment(200, 640, 'rose', 285, 243, 803, 470, 30, 'Begin Play');
comment(200, 640, 'violet', 945, 136, 1440, 470, 29, 'Save settings when UI closed');
comment(200, 640, 'teal', 3, 514, 1440, 1010, 29);
comment(690, 230, 'brown', 46, 6, 2980, 2240, 27, 'The main mod handling');
comment(690, 230, 'gray', 685, 200, 1331, 660, 28, 'Replicate player controllers');
comment(690, 230, 'gray', 685, 741, 941, 910, 48, 'Get all players in game every few/seconds');
comment(690, 230, 'gray', 69, 880, 500, 1225, 28, 'Event Tick');
comment(690, 230, 'gray', 685, 1000, 2043, 1247, 26, 'Increments RAS upon playerID saluting');
comment(690, 630, 'gray', 685, 125, 2303, 488, 25, 'If players have RAS by end of level');
comment(690, 630, 'gray', 717, 189, 1482, 458, 26, 'Checks if all players in game are in escape pod');
comment(690, 630, 'gray', 111, 577, 888, 835, 28, 'Disable the widgets if client or in a level');
comment(690, 630, 'gray', 1095, 577, 1935, 943, 28, 'Creates initial playerRASCounts map with players currently in the game');
comment(1160, 540, 'gray', 957, 395, 1570, 758, 25, 'Decide whether to kill or end level (by harsh mode)');

bubble(705.3, 197, 0, 0, 452, 'The main mod handling');
bubble(200, 225, 69, 672, 837, 'Testing kill or end level works as it should');
bubble(200, 640, 285, 138, 519, 'Begin Play');
bubble(200, 640, 945, 30, 1505, 'Save settings when UI closed');
bubble(690, 230, 685, 97, 1209, 'Replicate player controllers');
bubble(690, 230, 685, 637, 1464, 'Get all players in game every few seconds');
bubble(690, 230, 69, 774, 303, 'Event Tick');
bubble(690, 230, 685, 895, 1410, 'Increments RAS upon playerID saluting');
bubble(690, 630, 685, 18, 1329, 'If players have RAS by end of level');
bubble(690, 630, 717, 85, 1572, 'Checks if all players in game are in escape pod');
bubble(690, 630, 111, 472, 837, 'Disable the widgets if client or in a level');
bubble(690, 630, 1095, 472, 2367, 'Creates initial playerRASCounts map with players currently in the game');
bubble(1160, 540, 957, 288, 1944, 'Decide whether to kill or end level (by harsh mode?) etc');

region(200, 225, `w 187,80 390,80
w 54,80 35,82 25,100 25,150 30,154 218,154 280,205 287,222 284,230 268,230
m 185,97 205,100 210,115 228,115
r 280,122 300,120 322,98 390,98
w 443,98 458,98 497,138 653,138
w 46,220 62,220 72,231 120,231
b 75,328 95,322 101,300 103,255 120,249
b 265,267 285,267 362,189 390,189
b 523,189 540,189 575,156 655,156
w 658,319 783,319
b 658,337 783,337
w 870,319 955,323
b 870,337 955,339
b 162,466 178,466 230,415 265,415
b 496,530 517,530 517,515 508,510
b 405,474 387,478 387,488
b 643,491 625,495 625,505 640,507
b 745,507 757,515 757,527 738,528
b 676,528 658,532 658,541 700,540
b 735,533 790,536 788,549 768,549
b 1074,485 1161,487
d 1161,502 1143,505 1143,517 1155,520
d 1250,532 1268,532 1268,520 1255,518
w 187,894 522,894
b 433,958 447,958 495,912 522,912
w 543,1052 955,1052
w 1060,1053 1183,1055
b 1058,1070 1183,1073
w 1322,1056 1342,1058 1342,1160 1310,1191 207,1191 203,1183 203,1105 217,1087 232,1087
b 232,1071 214,1073 214,1085 260,1085 315,1122 313,1132 298,1132
b 193,1138 212,1136 234,1132
b 395,1132 376,1130 376,1085 440,1085 476,1120 472,1132 458,1132`,
`b 42 50 155 70|Get Current Level Name||e54,80 e185,80 m183,97
v 217 106 77 33|==||m228,115 M228,130 r282,122
k 378 50 77 60|Branch||e389,80 r390,98 E442,80 e442,98
g 378 150 161 65|Get Component by Class|Target is Actor|b390,189 P390,205 b523,189
b 642 96 203 69|Kill|Target is Health Component Base|e653,138 b655,156 E832,138
k -60 193 119 90|    For Each Loop||e46,220 B44,238 N44,254 E46,270
t 108 204 173 72|Cast To BP_PlayerCharacter||e120,231 b120,249 e268,231 E268,250 b265,267
g -40 300 127 38|      Get Game State||b75,328
b 513 290 156 72|Get All Widgets Of Class||E523,319 P523,337 R523,352 e658,319 b658,337
k 771 290 113 92|For Each Loop||e783,319 b783,337 e870,319 b870,337 N870,352 E870,369
b 945 280 237 69|End Overlay|Target is Player Affliction Overlay Widget|e955,323 b955,339 E1172,323
vy 253 366 89 61|SET||E265,382 E328,382 Y265,400 Y327,400 b265,415
b 48 420 128 56|Get Actor Of Class||E164,448 P60,466 b162,466
vb 392 462 90 23|||b406,474 b470,474
b 381 486 129 56|Get Actor Of Class||E394,513 E498,513 P394,531 b496,531
b 630 432 111 84|SetText (Text)|Target is Text|E643,474 E729,474 b643,491 K643,507
vb 663 516 90 24|||b676,528 b738,528
vb 696 538 90 23|||b768,549
t 900 420 188 75|Cast To EnemyWaveController||E913,449 E913,467 E1077,467 b1074,485
c 1149 441 206 72|Bind Event to On Wave Completed||E1161,471 E1342,471 b1161,487 d1161,502
r 1149 516 111 55|someevent|Custom Event|d1250,532 E1246,560
r 81 852 117 54|KillPlayer_Event|Custom Event|d190,867 e187,894
b 513 852 201 70|Kill|Target is Health Component Base|e522,894 b522,912 E703,894
g 285 918 161 65|Get Component by Class|Target is Actor|B297,958 P297,973 b433,958
k 1137 798 141 59|Switch Has Authority||E1151,827 E1266,846
k 219 1026 164 89|For Each Loop with Break||E232,1053 b232,1071 e232,1087 e372,1053 b370,1071 N370,1087 E372,1104
t 383 1026 171 73|Cast To BP_PlayerCharacter||e394,1053 b394,1071 e543,1053 B541,1088
g 90 1110 117 38|Get Game State||b193,1138
vb 219 1121 91 24|||b234,1132 b298,1132
vb 382 1121 91 24|||b396,1132 b458,1132
b 945 1026 126 54|Get Actor Of Class||e955,1053 P955,1070 e1060,1053 b1058,1071
b 1170 1014 165 69|End Level|Target is FSDGame Mode|e1183,1056 b1183,1073 e1322,1056`);

region(200, 640, `w 517,325 567,327
w 710,327 988,327
w 1080,218 1095,218 1160,283 1225,283
w 1086,283 1225,283
w 1074,417 1088,417 1210,290
b 1287,362 1307,362 1307,350 1270,315 1225,315
m 1288,384 1308,384 1308,370 1280,340 1208,325 1225,316
d 988,360 970,362 970,373 985,375
d 1080,388 1097,388 1097,378 1085,375
w 72,672 92,672 97,660 97,612 112,606
w 176,606 290,606
w 350,606 404,608
w 545,608 632,606
w 695,606 740,606 750,610 762,610
w 884,610 1640,610
b 3,625 113,625
b 176,624 288,624
b 545,626 632,624
b 695,624 762,628
w 72,692 1040,692 1057,708 1057,730 1075,737
w 72,711 90,711 106,728
w 72,729 88,731 92,757 103,759
w 245,738 373,738
b 3,832 68,776 103,776
b 3,832 995,832 1057,765 1075,755
b 296,832 357,765 373,755
d 3,866 70,794 103,792
d 275,866 290,862 354,795 357,775 372,770
d 1015,864 1030,862 1057,835 1057,775 1073,770
w 268,890 298,888
n 266,909 298,905
w 360,888 435,888 468,853 712,853 733,880 750,890
n 360,904 378,906 430,960 445,980
m 510,881 530,884 530,895 500,910 430,908 430,916 448,920
m 448,951 430,953 430,965 508,966 508,978 490,980
m 511,919 590,919
k 676,919 750,923
b 752,909 737,912 737,935 760,944
b 820,944 833,944 833,933 820,930
b 755,944 737,950 737,958 815,956 830,960 812,967
w 1009,890 1045,888
r 1009,909 1045,905
w 1104,888 1203,890
r 1105,905 1123,907 1123,915 1080,916 1080,925 1095,926
k 1140,926 1203,924
b 1203,909 1187,912 1187,940 1205,944
b 1270,944 1285,944 1285,933 1270,930
b 1205,944 1190,950 1190,958 1265,956 1285,960 1267,967`,
`r 407 297 120 39|Event BeginPlay||d520,305 e517,325
c 555 297 167 72|Bind Event to On Initialise||e567,327 B567,344 d567,360 e710,327
g 342 351 224 77|Create Event||b354,378 d555,378
r 975 189 116 56|Event End Play||d1084,199 e1080,219 N1078,236
r 975 255 121 40|Event Destroyed||d1090,264 e1086,283
c 975 297 167 72|Bind Event to On UI Closed||e988,327 B988,344 d988,360 E1132,327
r 975 375 111 53|Save Settings|Custom Event|d1080,388 e1074,417
b 1214 255 130 88|Save Game to Slot||e1225,284 b1226,301 m1226,316 N1226,331 E1334,284 R1332,301
vb 1216 352 86 21|||b1287,362
vm 1216 374 86 20|||m1288,384
k -60 645 147 119|        Sequence||e72,672 e72,692 e72,711 e72,729
vb 102 592 88 42|SET||e113,606 b113,624 e176,606 b176,624
vb 274 592 89 42|SET||e287,606 b287,624 e350,606 B350,624
c 393 579 165 71|Create Debug HUD Widget||e404,608 P405,626 B405,641 e545,608 b545,626
vb 621 592 86 42|SET||e632,606 b632,624 e696,606 b696,624
b 750 567 147 85|Add to Viewport|Target is User Widget|e762,610 b762,628 e884,610
c 90 729 159 72|Bind Event to Kill Player||e103,759 b103,776 d103,792 E237,759
c 360 708 174 72|Bind Event to Min Required||e373,738 b373,755 d372,770 E522,738
c 1063 708 167 72|Bind Event to Harsh Mode||e1075,738 b1075,755 d1074,770 E1218,738
r 156 849 126 69|SetMinReq_Event|Custom Event|d275,862 e268,890 n266,909
vn 285 873 90 42|SET||e298,888 n298,905 e362,888 n360,905
vm 438 870 87 22|||m512,881
g 435 891 90 69|Append||m448,919 M448,934 m448,951 m511,919
vn 435 968 68 26|-||n448,980 m490,980
g 576 891 114 38|ToText (string)||m588,919 k676,919
b 738 849 111 84|SetText (Text)|Target is Text|e750,890 b752,909 k752,924 E837,890
vb 738 935 91 19|||b754,944 b820,944
vb 738 957 91 22|||b812,968
r 879 849 144 69|SetHarshMode_Event|Custom Event|d1015,862 e1009,890 r1009,909
vr 1030 873 89 42|SET||e1043,888 r1045,905 e1104,888 r1105,905
v 1083 915 68 25|-||r1097,926 k1139,926
b 1191 849 111 84|SetText (Text)|Target is Text|e1203,890 b1204,909 k1204,924 E1290,890
vb 1191 935 91 19|||b1206,944 b1270,944
vb 1191 957 91 22|||b1267,968`);
add('<rect x="315" y="776" width="73" height="5.500" fill="#ddd"/><text x="316" y="780.300" font-size="3.600" font-weight="700" fill="#333">OnInitialiseHandleDelegate(LocalPlayer)</text><text x="315" y="773" font-size="3.500" fill="#bbb">Signature: (Player Controller Object Reference)</text><text x="210" y="892" font-size="3.500" fill="#bbb">Add pin +</text><text x="357" y="955" font-size="3.500" fill="#bbb">Add pin +</text>');

region(690, 230, `w 298,962 314,962 705,570 713,555 713,450 732,447
w 298,980 314,982 712,588 720,575 720,310 724,304 738,304
w 298,1020 320,1018 478,858 738,858
w 298,1000 312,1000 382,1070 750,1070
w 298,1038 430,1038 478,1036 733,1290 733,1452 740,1459 835,1459
w 298,1056 315,1058 342,1090 342,1112 360,1117
w 183,962 230,962
l 181,980 200,982 203,993 180,1015 180,1140 185,1149 198,1149
k 280,1149 360,1150
b 360,1134 345,1134 345,1143 430,1160 430,1170 410,1171
b 350,1171 333,1174 333,1183 460,1180 463,1190 445,1193
w 792,304 880,304 890,307 900,307
r 738,320 722,322 722,332 735,334
r 798,356 818,354 818,342 808,338
w 788,466 970,466
b 732,465 715,467 715,475 730,478
b 793,482 812,480 812,470 800,468
b 868,567 885,567 952,500 955,485 970,482
b 733,567 716,572 718,582 815,582 847,615 845,628 830,628
w 837,1070 922,1070
w 1070,1070 1128,1070
b 750,1087 733,1090 733,1100 800,1100 855,1145 855,1165 838,1166
b 837,1087 855,1090 903,1135 905,1183 912,1188 1265,1188 1320,1130 1332,1127
b 922,1087 905,1090 905,1098 1020,1120 1050,1145 1050,1160 1033,1160
b 1070,1107 1090,1105 1108,1088 1128,1087
d 1128,1104 1112,1106 1112,1116 1125,1118
d 1260,1134 1277,1134 1277,1122 1265,1118
w 1254,1161 1270,1161 1315,1110 1318,1096 1332,1095
w 1440,1095 1455,1092 1470,1081 1527,1081
n 1437,1112 1470,1130 1537,1130`,
`r 99 933 96 57|Event Tick||d187,943 e183,962 l181,980
k 219 933 93 157|Sequence||e230,962 e298,962 e298,980 e298,1000 e298,1020 e298,1038 e298,1056
g 186 1122 108 49|ToText (float)||l198,1149 k280,1149
b 348 1074 111 85|SetText (Text)|Target is Text|e360,1117 b360,1134 k361,1150
vb 339 1161 90 21|||b351,1171 b410,1171
vb 370 1183 90 20|||b446,1193
k 726 276 77 53|Branch||e738,304 r738,320 e792,304
g 726 330 88 36|Is Server||r798,356
b 888 264 177 70|Replicate Player Controllers|Target is Mod 067|e900,307 B901,324
vb 720 474 89 19|||b793,482
k 720 418 80 54|Is Valid||e732,447 E787,447 b732,465 e788,466
vb 957 448 89 46|SET||e969,465 E1033,465 b970,482 B1031,482
g 720 525 161 68|Get Component by Class|Target is Actor|b733,567 P733,583 b868,567
g 720 603 123 37|Get Local Player||b829,628
b 726 815 132 71|Regenerate Struct|Target is Mod 067|e738,858 B739,876 E846,858
k 738 1041 113 90|For Each Loop||e750,1070 b750,1087 e838,1070 b837,1087 N837,1104 E838,1120
g 738 1140 113 36|Get All Players||b838,1166
t 909 1041 174 75|Cast To BP_PlayerCharacter||e922,1070 b922,1087 e1070,1070 E1070,1088 b1069,1107
g 909 1119 138 51|Get Controlled Pawn|Target is Controller|b922,1160 b1033,1160
b 1116 1041 186 72|Bind Event to On Salute Event||e1128,1070 b1128,1087 d1128,1104 E1288,1070
r 1116 1117 152 55|OnSaluteEvent_Event_0|Custom Event|d1260,1134 e1254,1161
b 1320 1053 132 84|Edit RAS in Struct|Target is Mod 067|e1332,1095 B1332,1112 b1332,1128 e1440,1095 n1437,1112`);
add('<text x="774" y="592" font-size="3.500" fill="#bbb">Add pin +</text>');

region(690, 630, `w 940,259 1050,259
w 1104,259 1120,259 1185,196 1590,196
w 1104,279 1120,280 1145,302 1257,302
w 1302,302 1320,302 1398,380 1398,412 1392,419 815,419 808,412 808,275 818,262 835,259
b 940,277 958,280 958,288 940,303 848,303 842,310 855,316
n 918,316 935,314 945,306 1050,306
r 1050,277 1034,280 1034,290 1115,292 1125,302 1120,313 1105,313
n 1050,321 1034,323 1036,332 1150,334 1168,342 1165,353 1147,353
u 1050,353 1033,356 1033,366 1120,368 1135,380 1132,392 1118,393
w 0,640 150,640 166,637
w 218,637 348,637
w 480,637 500,637 520,659 534,659
w 218,657 262,657 336,732 640,732 655,718 697,717
w 586,678 602,680 640,716 697,717
r 166,656 150,658 150,666 225,670 246,685 244,698 228,700
m 480,655 498,657 498,667 340,670 332,675 332,682 348,684
r 403,691 418,691 434,676 534,676
b 697,733 679,736 679,746 750,746 778,770 776,781 757,781
b 697,781 682,785 682,793 770,790 778,797 757,803
w 793,717 1110,717 1118,711 1150,711 1178,742 1192,745
w 1280,745 1365,748
b 1192,763 1175,765 1175,778 1248,778 1300,825 1298,841 1282,841
n 1280,778 1300,776 1335,745 1335,670 1355,664
b 1280,763 1300,770 1320,781 1366,781
w 1280,795 1340,795 1385,840 1420,840
m 1396,664 1412,662 1425,650 1440,650
m 1503,636 1523,638 1523,650 1497,670 1497,690 1515,700
n 1363,911 1430,913
m 1470,913 1490,910 1490,902 1412,900 1412,892 1430,889
m 1493,873 1600,873`,
`b 825 231 126 56|Get Actor Of Class||e835,259 P838,277 e940,259 b938,277
vn 844 305 92 24|||b858,316 n919,316
k 1041 231 75 60|Branch||e1051,259 r1051,277 e1105,259 e1105,279
v 1040 299 82 30|==||n1051,306 n1051,321 r1105,313
vu 1040 331 122 49|LENGTH||u1050,353 n1146,353
vu 1040 382 88 22|||u1120,393
b 1245 273 72 58|Delay||e1257,302 L1258,319 e1303,302
k 153 609 78 59|Branch||e166,637 r167,656 e218,637 e218,657
g 153 674 87 37|Is Server||r228,700
b 339 609 153 67|Get Current Level Name||e348,637 e481,637 m480,655
vm 339 676 78 34|==||m348,684 M348,699 r403,691
k 522 630 77 60|Branch||e534,659 r534,676 E586,659 e586,678
b 684 675 123 85|Set Visibility|Target is Widget|e697,717 b697,733 N698,749 e793,717
vb 684 771 90 21|||b697,781 b758,781
vb 684 793 90 21|||b758,803
k 1179 717 114 90|For Each Loop||e1192,745 b1192,763 e1280,745 b1280,763 n1280,778 e1280,795
g 1179 813 114 38|Get All Players||b1281,841
b 1353 706 138 86|Add Player to Struct|Target is Mod 067|e1365,748 B1366,767 b1366,781 e1478,748
vn 1341 653 68 24|-||n1355,664 m1396,664
g 1428 609 90 59|Append||M1440,636 m1440,651 m1503,636
vn 1287 900 90 22|||n1363,911
g 1419 846 87 60|Append||M1430,873 m1430,889 m1493,873
v 1419 903 66 23|-||n1430,913 m1470,913`);
add('<text x="1176" y="850.500" font-size="3.500" fill="#bbb">Add pin +</text><text x="1173" y="929.500" font-size="3.500" fill="#bbb">Add pin +</text><circle cx="1128" cy="721.500" r="2.600" fill="#eee"/>');

region(1160, 540, `w 232,152 247,152 262,161 270,161
w 330,161 410,161 420,165 430,165
m 170,200 185,200 210,180 270,178
n 82,242 100,242 100,252 25,258 28,265 42,265
m 82,265 128,267
m 127,237 112,235 112,226 125,222
m 190,237 268,237
k 355,237 372,237 410,200 430,198
b 430,183 415,185 412,197 510,207 512,217 492,219
b 432,219 415,222 415,232 512,230 512,241 492,241
w -20,466 180,466
w 322,465 388,465
w 535,465 550,466 555,475 555,550 570,554
b 180,482 163,485 163,495 240,497 290,545 288,560 272,561
b 320,482 340,484 369,515 369,590 375,592 550,592 570,588
b 388,482 370,485 370,495 480,497 515,530 515,552 500,553
b 535,500 870,500 973,602 977,636 1338,638
w 678,554 692,554 735,510 738,470 753,465
n 676,588 692,588 732,550 755,533
r 755,482 738,485 738,493 795,495 828,530 824,540 808,541
n 755,547 738,548 740,556 815,556 822,560 805,565
w 806,483 990,483
w 180,500 160,502 154,512 154,690 160,700 1600,700
w 1045,483 1337,483
w 1045,503 1062,503 1118,562 1175,562
r 990,502 975,504 975,514 1065,516 1074,518 1060,523
w 1222,562 1545,562 1560,568
w 1440,483 1545,483 1560,490
b 1438,500 1560,500
b 1472,638 1490,638 1560,572
k 195,970 210,970 228,986 343,986
m 94,906 114,910 114,920 90,935 90,965 105,970
w 66,1018 160,1018 180,1014
w 236,1014 252,1014 313,954 343,954
n 180,1032 164,1035 164,1044 250,1042 252,1050 235,1052
b 343,971 326,974 326,985 400,990 415,1000 395,1009
b 333,1009 318,1013 318,1022 440,1017 447,1025 428,1029
w 0,1110 365,1110 386,1116
m 82,1142 226,1142
k 313,1142 386,1149
b 386,1134 370,1137 370,1147 440,1150 458,1162 440,1170
b 376,1170 360,1175 360,1184 480,1178 490,1185 470,1191`,
`k 105 123 140 59|Switch Has Authority||e117,152 e232,152 E232,171
vm 256 145 88 46|SET||e270,161 m270,178 e330,161 M330,178
vn 117 190 67 22|-||n127,200 m170,200
g 117 210 87 67|Append||m127,237 M127,252 m127,267 m190,237
vn 8 231 90 21|||n82,242
vn 29 255 68 22|-||n42,265 m82,265
g 255 210 114 37|ToText (string)||m268,237 k355,237
b 417 123 111 86|SetText (Text)|Target is Text|e430,165 b430,183 k430,198 E516,165
vb 417 210 90 20|||b432,219 b492,219
vb 417 232 90 21|||b493,241
k 171 435 162 90|For Each Loop with Break||e181,465 b181,482 e181,500 e322,465 b320,482 N320,498 E322,515
g 171 534 111 37|Get All Players||b272,561
t 375 435 174 76|Cast To BP_PlayerCharacter||e387,465 b388,482 e535,465 E535,482 b535,500
g 375 513 138 50|Get Controlled Pawn|Target is Controller|b388,553 b500,553
b 558 513 132 85|Find RAS in Struct|Target is Mod 067|e571,554 U571,571 b571,588 e678,554 U676,571 n676,588
k 741 435 78 61|Branch||e753,465 r755,482 E807,465 e807,483
vn 735 523 89 32|&gt;=||n755,533 n755,547 r808,541
vn 732 556 89 22|||n805,566
vr 981 512 87 21|||r1058,522
k 981 456 75 58|Branch||e990,483 r990,502 e1045,483 e1045,503
b 1164 533 72 57|Delay||e1175,562 L1177,579 e1222,562
b 1326 456 129 54|Get Actor Of Class||e1337,483 P1338,500 e1441,483 b1438,500
g 1326 597 162 68|Get Component by Class|Target is Actor|b1338,638 P1338,655 b1472,638
b 1551 444 60 69|
b 1551 522 60 69|
g 93 945 114 37|ToText (string)||m106,970 k194,970
v 171 1001 77 39|++||e180,1014 N180,1032 e237,1014 N236,1032
vn 159 1042 89 21|||n235,1052
b 333 912 108 85|SetText (Text)|Target is Text|e343,954 b343,971 k343,986 E430,954
vb 321 999 90 20|||b334,1009 b395,1009
vb 354 1019 90 21|||b428,1029
g 213 1116 114 38|ToText (string)||m225,1142 k313,1142
b 375 1074 111 85|SetText (Text)|Target is Text|e386,1116 b387,1134 k387,1149 E472,1116
vb 363 1161 90 20|||b377,1170 b440,1170
vb 396 1182 90 20|||b470,1191`);
add('<circle cx="1570.500" cy="718.500" r="2.600" fill="#eee"/><text x="1209" y="627" font-size="3.500" fill="#bbb">Add pin +</text>');
[[423,321],[385.500,832.500],[498.500,828.500]].forEach(([x, y]) => add(`<rect x="${x - 2.5}" y="${y - 2}" width="5" height="4" rx="1" fill="#fff" stroke="#000"/>`));
add('<text x="1377" y="987.500" font-size="65.500" font-weight="700" fill="#fff" opacity=".2" textLength="292" lengthAdjust="spacingAndGlyphs">BLUEPRINT</text>');
svg.innerHTML = out;
```
